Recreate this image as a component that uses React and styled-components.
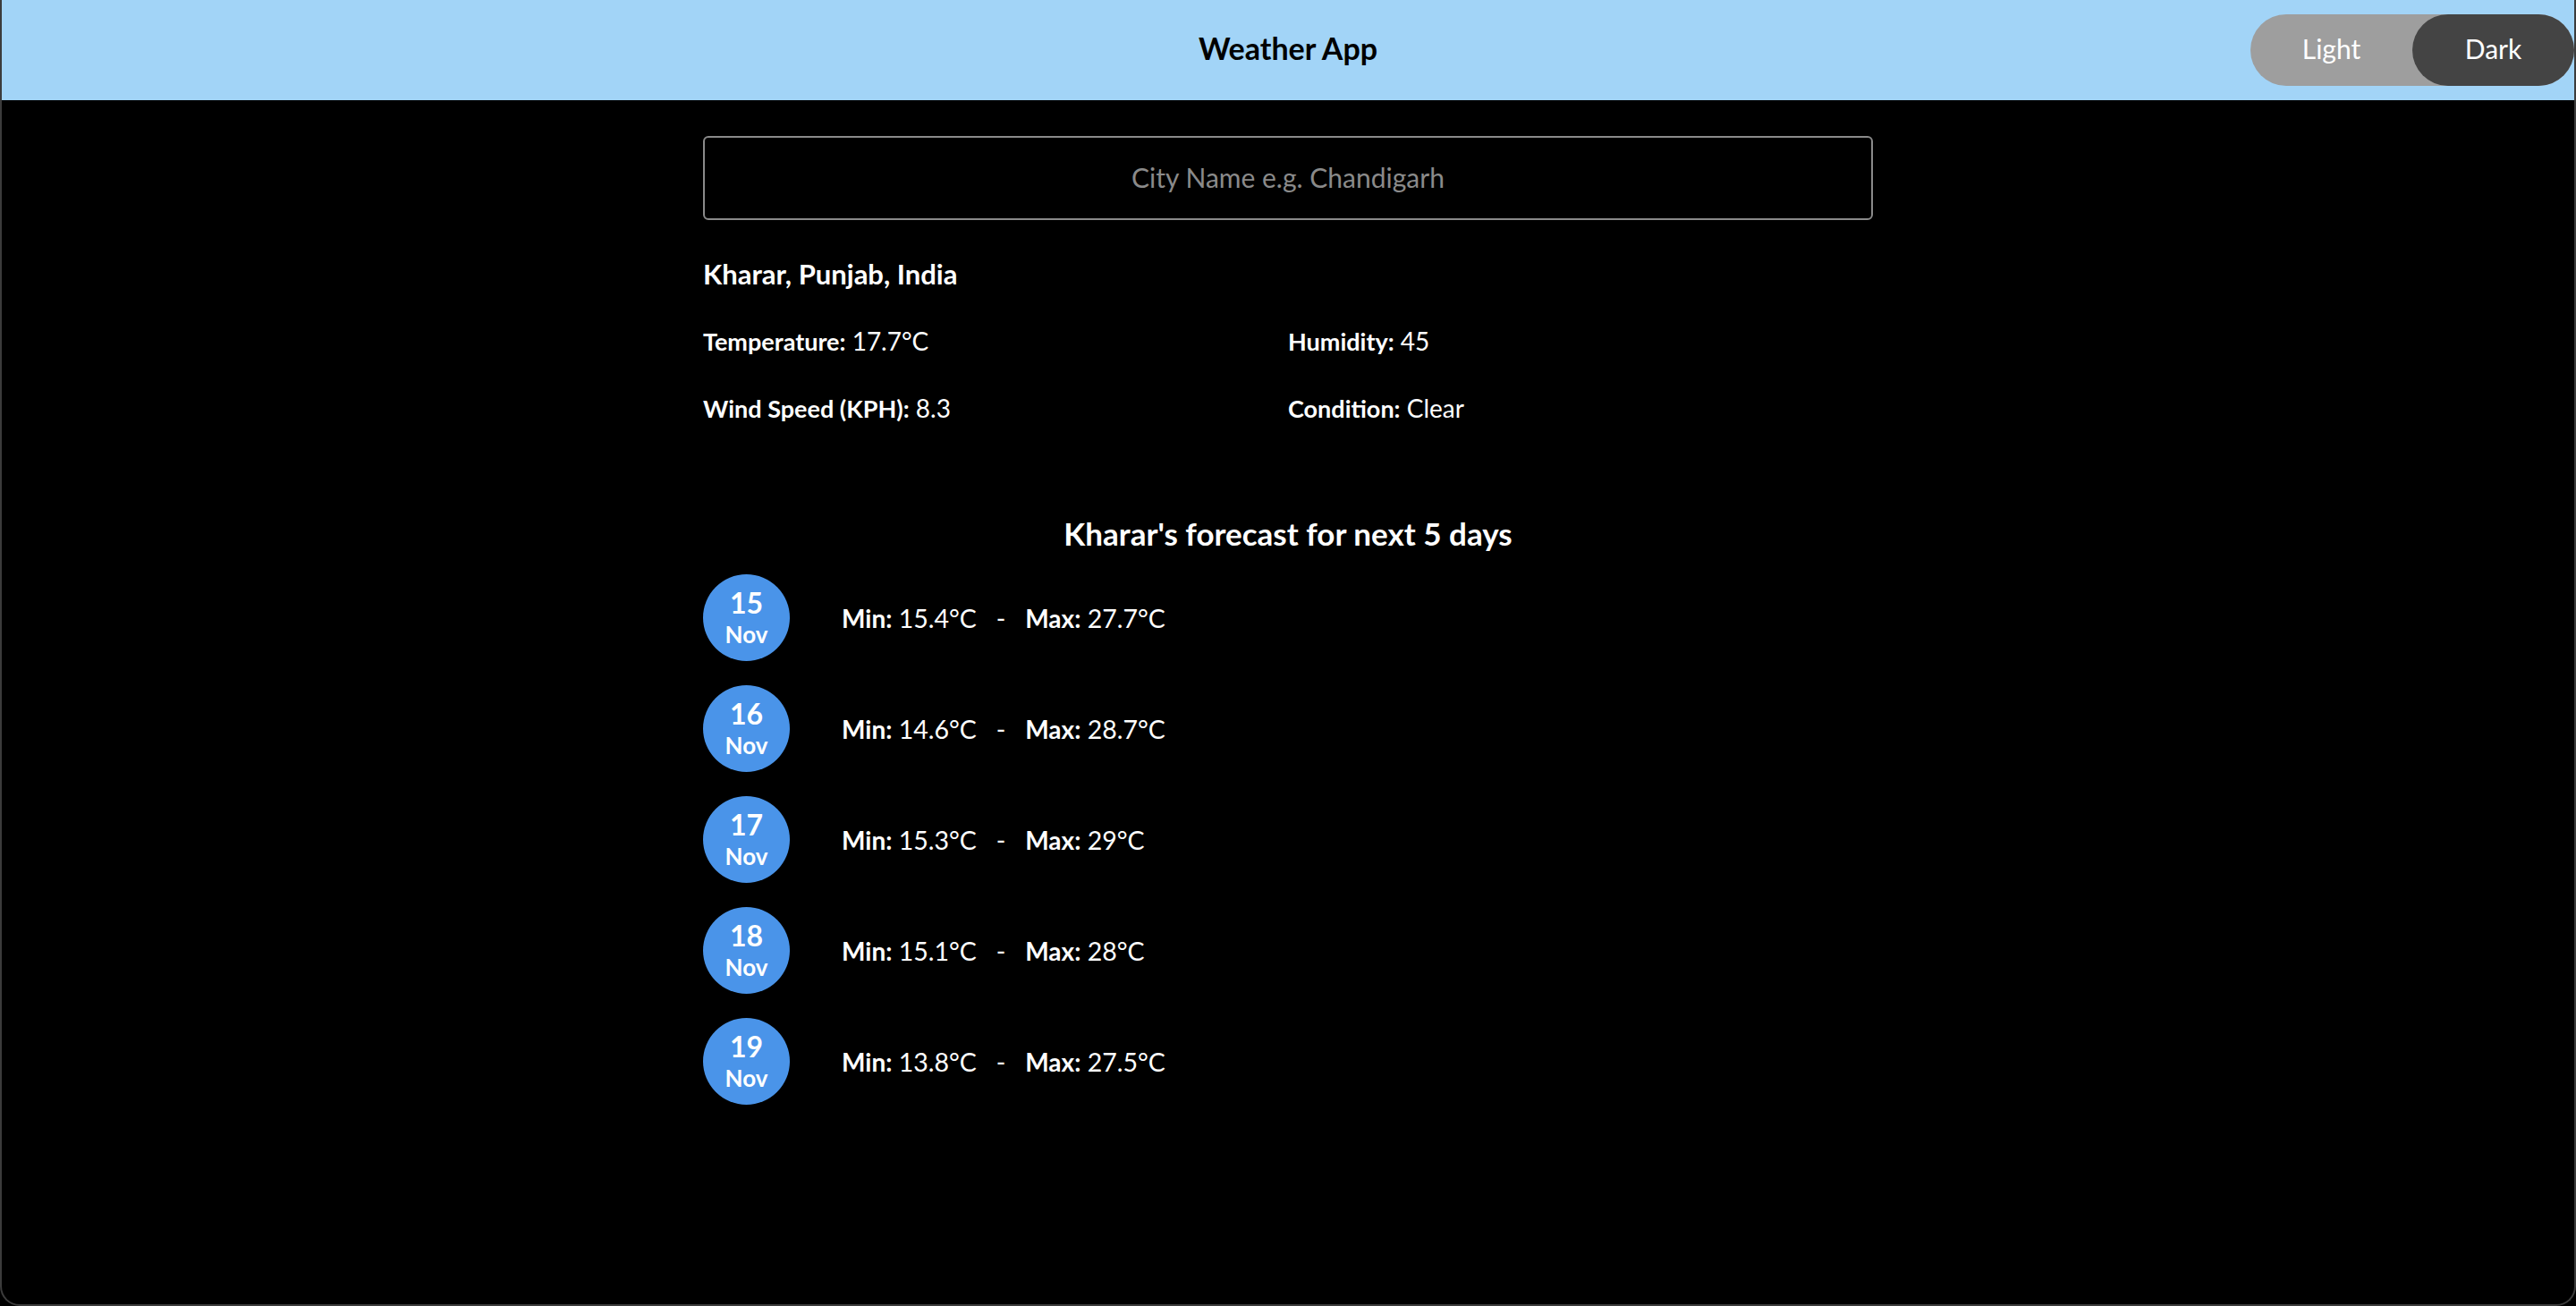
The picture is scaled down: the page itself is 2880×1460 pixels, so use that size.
import styled, {createGlobalStyle} from "styled-components"

const Global = createGlobalStyle`
  html, body {
    margin: 0;
    padding: 0;
    background: #000;
  }
  body {
    font-family: Lato, "Open Sans", sans-serif;
    color: #fff;
  }
  * {
    box-sizing: border-box;
  }
`

const Window = styled.div`
  height: 100vh;
  display: flex;
  flex-direction: column;
  background: #000;
  border: 2px solid #3c3c3c;
  border-top: none;
  border-radius: 0 0 22px 22px;
  overflow: hidden;
`

const Header = styled.header`
  position: relative;
  height: 112px;
  flex: none;
  background: #a2d4f7;
  display: flex;
  align-items: center;
  justify-content: center;
  padding-bottom: 6px;
`

const Title = styled.h1`
  margin: 0;
  font-size: 34px;
  font-weight: 700;
  color: #000;
`

const Toggle = styled.div`
  position: absolute;
  top: 16px;
  right: 0;
  width: 362px;
  height: 80px;
  border-radius: 40px;
  background: #9e9e9e;
  display: flex;
`

const ToggleOption = styled.button`
  flex: 1;
  border: none;
  border-radius: 40px;
  background: ${p => (p.active ? "#444444" : "transparent")};
  color: #fff;
  font-family: inherit;
  font-size: 30px;
  padding: 0 0 4px;
  cursor: pointer;
`

const Main = styled.main`
  width: 1308px;
  margin: 0 auto;
  padding-top: 40px;
  display: flex;
  flex-direction: column;
`

const Search = styled.input`
  width: 100%;
  height: 94px;
  border: 2px solid #8a8a8a;
  border-radius: 6px;
  background: #000;
  color: #fff;
  text-align: center;
  font-family: inherit;
  font-size: 30px;
  outline: none;
  padding-bottom: 4px;

  &::placeholder {
    color: #8a8a8a;
  }
`

const Location = styled.div`
  margin-top: 42px;
  font-size: 31px;
  font-weight: 700;
  line-height: 36px;
`

const Stats = styled.div`
  margin-top: 41px;
  display: grid;
  grid-template-columns: 1fr 1fr;
  row-gap: 42px;
  font-size: 28px;
  line-height: 32px;
`

const Label = styled.b`
  font-weight: 700;
  font-size: 27px;
`

const ForecastTitle = styled.h2`
  margin: 103px 0 0;
  text-align: center;
  font-size: 35px;
  line-height: 40px;
  font-weight: 700;
`

const DayList = styled.div`
  margin-top: 26px;
  display: flex;
  flex-direction: column;
  gap: 27px;
`

const DayRow = styled.div`
  display: flex;
  align-items: center;
  gap: 58px;
`

const DateBadge = styled.div`
  width: 97px;
  height: 97px;
  border-radius: 50%;
  background: #4a94e9;
  display: flex;
  flex-direction: column;
  align-items: center;
  justify-content: center;
  font-weight: 700;
  line-height: 1;
  padding-bottom: 2px;
`

const Day = styled.span`
  font-size: 32px;
`

const Month = styled.span`
  font-size: 26px;
  margin-top: 6px;
`

const Range = styled.div`
  font-size: 28.5px;
  white-space: pre;

  & > b {
    font-size: 28px;
  }
`

const days = [
  {day: 15, min: "15.4", max: "27.7"},
  {day: 16, min: "14.6", max: "28.7"},
  {day: 17, min: "15.3", max: "29"},
  {day: 18, min: "15.1", max: "28"},
  {day: 19, min: "13.8", max: "27.5"},
]

export default function App() {
  return (
    <>
      <Global />
      <Window>
        <Header>
          <Title>Weather App</Title>
          <Toggle>
            <ToggleOption>Light</ToggleOption>
            <ToggleOption active>Dark</ToggleOption>
          </Toggle>
        </Header>
        <Main>
          <Search placeholder="City Name e.g. Chandigarh" />
          <Location>Kharar, Punjab, India</Location>
          <Stats>
            <div>
              <Label>Temperature:</Label> 17.7°C
            </div>
            <div>
              <Label>Humidity:</Label> 45
            </div>
            <div>
              <Label>Wind Speed (KPH):</Label> 8.3
            </div>
            <div>
              <Label>Condition:</Label> Clear
            </div>
          </Stats>
          <ForecastTitle>Kharar's forecast for next 5 days</ForecastTitle>
          <DayList>
            {days.map(d => (
              <DayRow key={d.day}>
                <DateBadge>
                  <Day>{d.day}</Day>
                  <Month>Nov</Month>
                </DateBadge>
                <Range>
                  <Label>Min:</Label> {d.min}°C   -   <Label>Max:</Label> {d.max}°C
                </Range>
              </DayRow>
            ))}
          </DayList>
        </Main>
      </Window>
    </>
  )
}
